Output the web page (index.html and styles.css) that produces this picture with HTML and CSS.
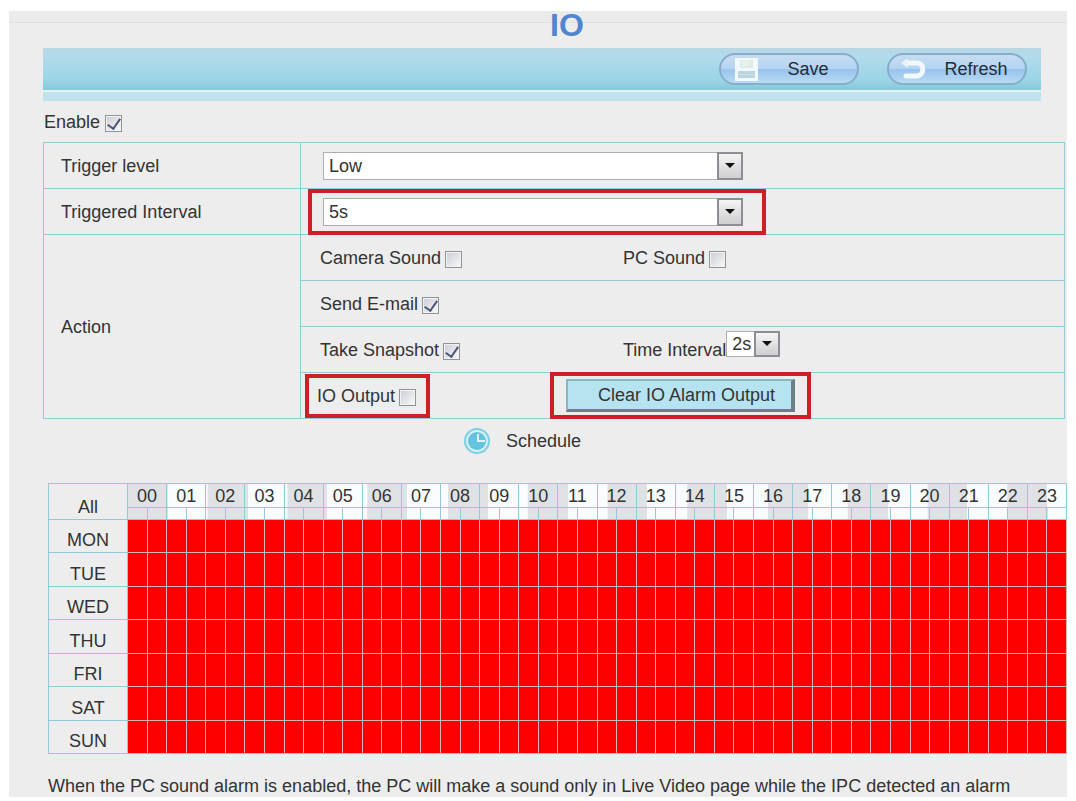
FILE: index.html
```html
<!DOCTYPE html>
<html lang="en">
<head>
    <meta charset="UTF-8">
    <meta name="viewport" content="width=device-width, initial-scale=1.0">
    <title>IO</title>
    <link rel="stylesheet" href="styles.css">
</head>
<body>
    <div class="panel">
        <h1>IO</h1>
        <div class="toolbar">
            <button type="button" class="pill">
                <svg width="26" height="26" viewBox="0 0 26 26">
                    <path fill="#f2f9fc" d="M2 2h23v23H2z"/>
                    <path fill="#dcebf0" d="M7 4h13v8H7z"/>
                    <path fill="#eaf2e4" d="M9 5h7v5H9z"/>
                    <path fill="#b9d5e2" d="M5 15h17v7H5z"/>
                    <path stroke="#cfe2ea" d="M5 18.500h17"/>
                </svg>
                <span>Save</span>
            </button>
            <button type="button" class="pill">
                <svg width="26" height="26" viewBox="0 0 26 26">
                    <path fill="none" stroke="#f2f8fc" stroke-width="5" stroke-linecap="round" d="M5 7h11c8 0 8 13-1 13H5"/>
                    <path fill="#e6f3fa" d="M0 7l7-5v10z"/>
                </svg>
                <span>Refresh</span>
            </button>
        </div>
        <div class="toolbar-strip"></div>

        <div class="enable">
            <label for="enable">Enable</label>
            <input type="checkbox" id="enable" checked>
        </div>

        <table class="settings">
            <tr>
                <th><label for="level">Trigger level</label></th>
                <td>
                    <div class="select wide">
                        <select id="level"><option>Low</option><option>High</option></select>
                        <span class="arrow"></span>
                    </div>
                </td>
            </tr>
            <tr>
                <th><label for="interval">Triggered Interval</label></th>
                <td>
                    <div class="select wide framed">
                        <select id="interval"><option>5s</option><option>10s</option></select>
                        <span class="arrow"></span>
                    </div>
                </td>
            </tr>
            <tr>
                <th rowspan="4">Action</th>
                <td>
                    <div class="fields">
                        <div class="check"><label for="camera">Camera Sound</label><input type="checkbox" id="camera"></div>
                        <div class="check"><label for="pc">PC Sound</label><input type="checkbox" id="pc"></div>
                    </div>
                </td>
            </tr>
            <tr>
                <td>
                    <div class="fields">
                        <div class="check"><label for="email">Send E-mail</label><input type="checkbox" id="email" checked></div>
                    </div>
                </td>
            </tr>
            <tr>
                <td>
                    <div class="fields">
                        <div class="check"><label for="snapshot">Take Snapshot</label><input type="checkbox" id="snapshot" checked></div>
                        <div class="time">
                            <label for="time">Time Interval</label>
                            <div class="select small">
                                <select id="time"><option>2s</option><option>5s</option></select>
                                <span class="arrow"></span>
                            </div>
                        </div>
                    </div>
                </td>
            </tr>
            <tr>
                <td>
                    <div class="fields output">
                        <div><div class="check marked"><label for="output">IO Output</label><input type="checkbox" id="output"></div></div>
                        <div><div class="clear-box marked"><button type="button" class="clear">Clear IO Alarm Output</button></div></div>
                    </div>
                </td>
            </tr>
        </table>

        <div class="schedule-title">
            <svg width="28" height="28" viewBox="0 0 28 28">
                <circle cx="14" cy="14" r="12" fill="#d5f0f7" stroke="#7dd0e4" stroke-width="2"/>
                <circle cx="14" cy="14" r="9" fill="#62c4df"/>
                <path fill="none" stroke="#e0f4fa" stroke-width="2" d="M15 7v7h7"/>
            </svg>
            <span>Schedule</span>
        </div>

        <table class="schedule">
            <colgroup><col class="day"><col span="48"></colgroup>
            <thead>
                <tr id="hours"><th rowspan="2">All</th></tr>
                <tr id="halves"></tr>
            </thead>
            <tbody id="days"></tbody>
        </table>

        <p class="note">When the PC sound alarm is enabled, the PC will make a sound only in Live Video page while the IPC detected an alarm</p>
    </div>

    <script>
        const days = ['MON', 'TUE', 'WED', 'THU', 'FRI', 'SAT', 'SUN'];
        let hours = '';
        for (let i = 0; i < 24; i++) {
            hours += `<th colspan="2">${String(i).padStart(2, '0')}</th>`;
        }
        document.getElementById('hours').innerHTML += hours;
        document.getElementById('halves').innerHTML = '<td></td>'.repeat(48);
        document.getElementById('days').innerHTML = days.map(day =>
            `<tr><th>${day}</th>${'<td class="on"></td>'.repeat(48)}</tr>`
        ).join('');

        document.getElementById('days').addEventListener('click', function (e) {
            if (e.target.tagName === 'TD') {
                e.target.classList.toggle('on');
            }
        });
    </script>
</body>
</html>
```
FILE: styles.css
```css
* {
    box-sizing: border-box;
}
body {
    font-family: "Liberation Sans", Arial, sans-serif;
    font-size: 18px;
    line-height: 20px;
    color: #333;
    margin: 11px 9px 4px;
    background: #fff;
}
button, select {
    font-family: inherit;
    font-size: 18px;
    color: #333;
}
.panel {
    background: linear-gradient(#ebebeb 11px, #dfdfdf 11px, #dfdfdf 12px, #ededed 12px);
    padding-bottom: 1px;
}
h1 {
    margin: 0;
    padding-left: 58px;
    font-size: 32px;
    line-height: 28px;
    height: 37px;
    text-align: center;
    color: #4f86cf;
}
.toolbar {
    display: flex;
    justify-content: flex-end;
    align-items: center;
    gap: 28px;
    margin: 0 26px 0 34px;
    padding: 0 14px;
    height: 42px;
    background: linear-gradient(#b9d6e3, #b2dbeb 20%, #9cd5e8 75%, #86c9d8);
}
.toolbar-strip {
    margin: 0 26px 0 34px;
    height: 11px;
    border-top: 2px solid #e3f1f5;
    background: #bfe2ec;
}
.pill {
    display: flex;
    align-items: center;
    width: 140px;
    height: 32px;
    padding: 0 12px;
    border: 2px solid #86aecb;
    border-radius: 16px;
    background: linear-gradient(#c6dcf0, #b4d5f3 48%, #98c2ee 52%, #b9dcf5);
    cursor: pointer;
}
.pill span {
    flex: 1;
    text-align: center;
    padding-left: 12px;
    color: #222c38;
}
.enable {
    display: flex;
    align-items: center;
    gap: 5px;
    margin-left: 35px;
    padding: 10px 0;
    height: 41px;
}
input[type="checkbox"] {
    appearance: none;
    display: grid;
    place-items: center;
    width: 17px;
    height: 17px;
    margin: 4px 0 0;
    border: 1px solid #8f9499;
    background: linear-gradient(135deg, #c9cdd4, #fafafa);
    box-shadow: inset 0 0 0 1px #f2f2f2;
}
input[type="checkbox"]:checked::after {
    content: "";
    width: 6px;
    height: 11px;
    margin-bottom: 2px;
    border: solid #4c5478;
    border-width: 0 2px 2px 0;
    transform: rotate(35deg);
}
.settings {
    width: calc(100% - 36px);
    margin-left: 34px;
    border-collapse: collapse;
    table-layout: fixed;
}
.settings th, .settings td {
    border: 1px solid #93cbd8;
    padding: 0;
    height: 46px;
}
.settings th {
    width: 257px;
    padding-left: 17px;
    font-weight: normal;
    text-align: left;
}
.select {
    display: grid;
    grid-template-columns: 1fr 26px;
    height: 28px;
}
.wide {
    width: 55%;
    margin-left: 22px;
}
.small {
    width: 54px;
    height: 26px;
}
.select select {
    grid-area: 1 / 1 / 2 / 3;
    appearance: none;
    width: 100%;
    padding: 0 5px;
    border: 1px solid #a9afb2;
    border-radius: 0;
    background: #fff;
}
.arrow {
    grid-area: 1 / 2;
    display: grid;
    place-items: center;
    border: 2px solid #8b8f93;
    background: linear-gradient(#f4f4f4, #cfcfd1);
    pointer-events: none;
}
.arrow::after {
    content: "";
    border: 5px solid transparent;
    border-top-color: #111;
    border-bottom: 0;
}
/* red frames round the settings to change */
.marked {
    outline: 4px solid #cb2026;
}
.framed {
    position: relative;
}
.framed::before {
    content: "";
    position: absolute;
    inset: -9px -23px -9px -15px;
    border: 4px solid #cb2026;
    pointer-events: none;
}
.fields {
    display: grid;
    grid-template-columns: 303px 1fr;
    align-items: center;
    padding-left: 19px;
}
.check {
    display: inline-flex;
    align-items: center;
    gap: 4px;
}
.time {
    display: flex;
    align-items: center;
}
.time .select {
    margin-bottom: 12px;
}
.output {
    grid-template-columns: 245px 1fr;
    padding-left: 8px;
}
.output .check {
    height: 36px;
    padding: 0 10px 0 8px;
}
.clear-box {
    display: inline-flex;
    padding: 3px 12px;
}
.clear {
    width: 229px;
    height: 33px;
    padding: 0 0 0 14px;
    border: 2px solid #8ab6c2;
    border-right: 4px solid #6c7f88;
    border-bottom: 3px solid #6c7f88;
    background: #b5e3ef;
    cursor: pointer;
}
.schedule-title {
    display: flex;
    align-items: center;
    justify-content: center;
    gap: 15px;
    height: 64px;
    padding-bottom: 20px;
    padding-right: 32px;
}
.schedule {
    width: calc(100% - 39px);
    margin-left: 39px;
    border-collapse: collapse;
    table-layout: fixed;
}
.schedule .day {
    width: 79px;
}
.schedule th, .schedule td {
    border: 1px solid #8fcbd8;
    padding: 0;
    font-weight: normal;
}
.schedule thead {
    background: linear-gradient(90deg, #dfe2e5 50%, #fafdfe 50%) 79px 0 / 80px 100%;
}
#hours {
    height: 24px;
}
#halves {
    height: 12px;
}
#hours th:first-child {
    background: #ededed;
    padding-top: 10px;
}
#days tr {
    height: 33px;
}
#days tr:nth-child(even) {
    height: 34px;
}
#days th {
    padding-top: 8px;
}
.schedule td.on {
    background: #fc0000;
    border-color: #d6b4b6;
}
.note {
    margin: 22px 0 0 39px;
}
```
